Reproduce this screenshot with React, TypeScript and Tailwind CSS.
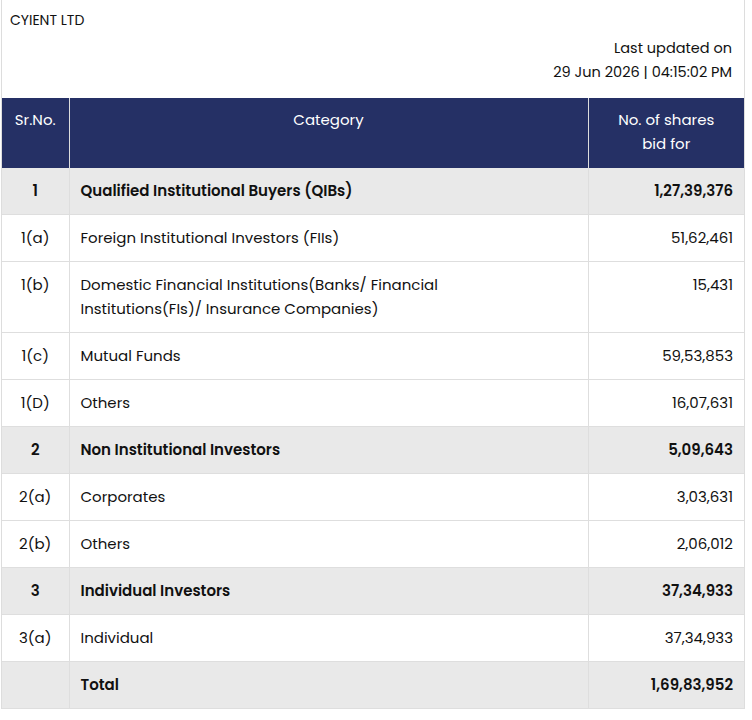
import React from "react";

const rows: [string, string, string, boolean][] = [
  ["1", "Qualified Institutional Buyers (QIBs)", "1,27,39,376", true],
  ["1(a)", "Foreign Institutional Investors (FIIs)", "51,62,461", false],
  ["1(b)", "Domestic Financial Institutions(Banks/ Financial\nInstitutions(FIs)/ Insurance Companies)", "15,431", false],
  ["1(c)", "Mutual Funds", "59,53,853", false],
  ["1(D)", "Others", "16,07,631", false],
  ["2", "Non Institutional Investors", "5,09,643", true],
  ["2(a)", "Corporates", "3,03,631", false],
  ["2(b)", "Others", "2,06,012", false],
  ["3", "Individual Investors", "37,34,933", true],
  ["3(a)", "Individual", "37,34,933", false],
  ["", "Total", "1,69,83,952", true],
];

export default function App() {
  return (
    <div className="w-[752px] bg-white text-[#111] text-[15px]" style={{ fontFamily: "Poppins, 'Noto Sans', sans-serif" }}>
      <div className="ml-[1px] w-[744px] border-x border-[#ddd]">
        <div className="px-[8px] pt-[10px] text-[14px] leading-[20px]">CYIENT LTD</div>
        <div className="px-[12px] pt-[6px] pb-[14px] text-right text-[14.5px] leading-[24px]">
          <div>Last updated on</div>
          <div>29 Jun 2026 | 04:15:02 PM</div>
        </div>
        <table className="w-full border-collapse">
          <thead>
            <tr className="bg-[#253065] text-white h-[70px]">
              <th className="w-[67px] font-normal border-r border-[#ddd] align-top pt-[10px] leading-[24px]">Sr.No.</th>
              <th className="font-normal border-r border-[#ddd] align-top pt-[10px] leading-[24px]">Category</th>
              <th className="w-[156px] font-normal align-top pt-[10px] leading-[24px]">No. of shares<br />bid for</th>
            </tr>
          </thead>
          <tbody>
            {rows.map(([a, b, c, bold], i) => (
              <tr key={i} className={`${bold ? "bg-[#e9e9e9] font-semibold" : ""} border-b border-[#dedede]`}>
                <td className={`border-r border-[#dedede] text-center align-top pt-[11px] pb-[11px] leading-[24px] ${bold ? "" : "font-normal"}`}>{a}</td>
                <td className="border-r border-[#dedede] px-[11px] align-top pt-[11px] pb-[11px] leading-[24px] whitespace-pre-line">{b}</td>
                <td className="px-[11px] text-right align-top pt-[11px] pb-[11px] leading-[24px]">{c}</td>
              </tr>
            ))}
          </tbody>
        </table>
      </div>
    </div>
  );
}
